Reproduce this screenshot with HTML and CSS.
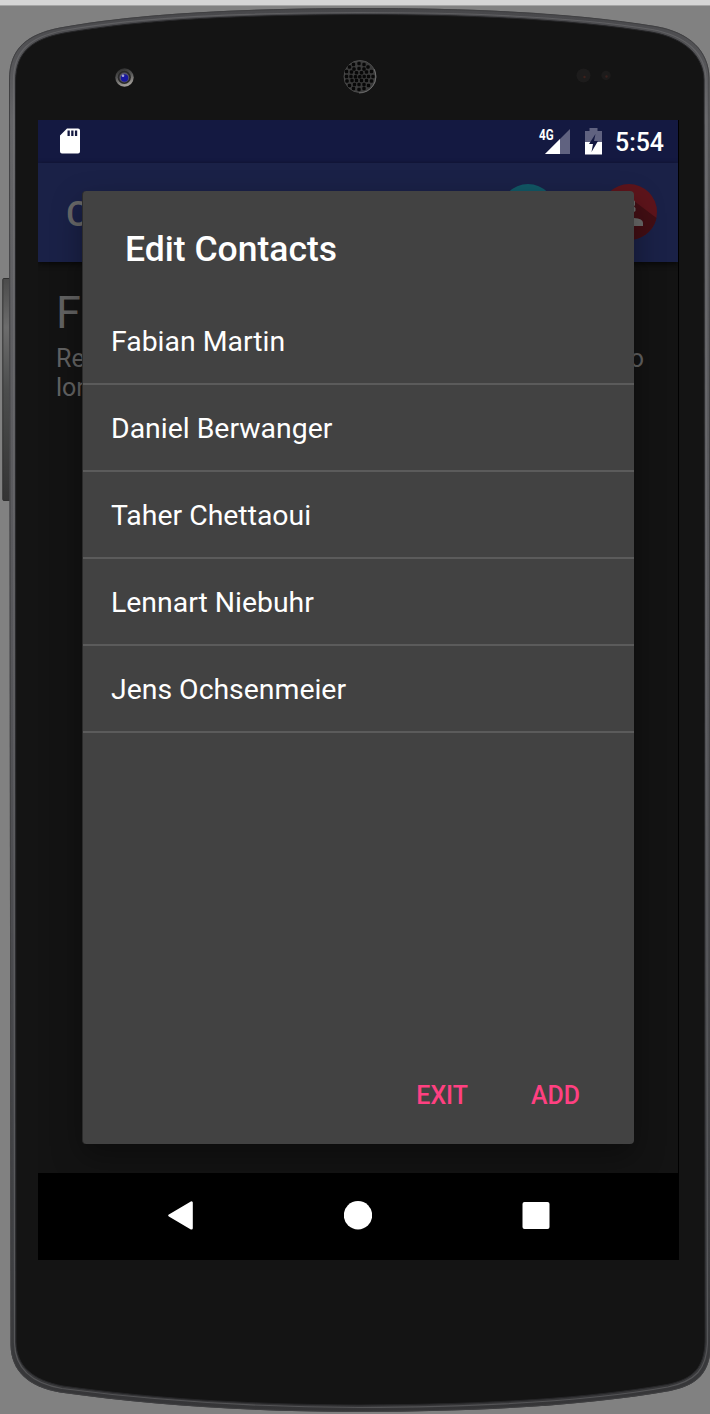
FILE: index.html
```html
<!DOCTYPE html>
<html lang="en">
<head>
<meta charset="utf-8">
<title>Edit Contacts</title>
<link rel="stylesheet" href="styles.css">
</head>
<body>
<main class="stage">
  <svg class="phone" width="710" height="1414" viewBox="0 0 710 1414" aria-hidden="true">
    <defs>
      <linearGradient id="rim" x1="0" y1="0" x2="0" y2="1"><stop offset="0" stop-color="#47474a"/><stop offset=".08" stop-color="#656568"/><stop offset=".45" stop-color="#56565a"/><stop offset=".9" stop-color="#3e3f42"/><stop offset="1" stop-color="#353537"/></linearGradient>
      <linearGradient id="key" x1="0" y1="0" x2="0" y2="1"><stop offset="0" stop-color="#4b4b4b"/><stop offset=".22" stop-color="#6c6c6c"/><stop offset=".5" stop-color="#4c4d4d"/><stop offset="1" stop-color="#343434"/></linearGradient>
      <linearGradient id="lensRing" x1="0" y1="0" x2=".3" y2="1"><stop offset="0" stop-color="#252525"/><stop offset=".5" stop-color="#555"/><stop offset="1" stop-color="#a09c98"/></linearGradient>
      <g id="hole"><rect x="-1.700" y="-1.700" width="3.400" height="3.400" rx="1.200" fill="#080808"/></g>
    </defs>
    <rect width="710" height="5" fill="#d5d5d5"/>
    <rect y="5" width="710" height="1" fill="#a5a5a5"/>
    <rect x="2.8" y="278.5" width="9" height="222" rx="1" fill="url(#key)" stroke="#303030" stroke-width="1"/>
    <path d="M9 80C9 48 27 34 60 27.500C140 13 240 8.500 359 8C465 8 570 12 655 26C690 32 709 51 709.500 78L711 1345C710 1372 699 1385 670 1391C590 1405 490 1411.500 359 1412C240 1411.500 150 1405 60 1392.500C28 1387 11 1371 10.500 1345Z" fill="url(#rim)"/>
    <path d="M9.500 80C9.500 48 27.500 34.500 60 28C140 13.500 240 9 359 8.500C465 8.500 570 12.500 655 26.500C690 32.500 708.500 51 709 78L710.500 1345C709.500 1372 698.500 1384.500 670 1390.500C590 1404.500 490 1411 359 1411.500C240 1411 150 1404.500 60 1392C28.500 1386.500 11.500 1371 11 1345Z" fill="none" stroke="#404042"/>
    <path d="M13.500 80C13.500 50 31 37 63 30.500C145 16.500 240 13 359 12.500C465 12.500 570 16 652 29.500C687 36 705.500 54 706 79L707.500 1343C706.500 1369 696 1381 668 1387C590 1401 490 1407 359 1407.500C240 1407 150 1400 62 1388.500C31 1383 15 1368 14.500 1343Z" fill="none" stroke="#77777b" stroke-opacity=".45" stroke-width="1.200"/>
    <path d="M15.500 82C15.500 51 33 39 64 33C145 19 240 15 359 14.500C465 14.500 570 19 651 32C685 38 703.500 56 704 80L705 1342C704 1367 694 1379 667 1384.500C590 1398 490 1404.500 359 1405C240 1404.500 150 1398 63 1386C32 1380 16.500 1366 16 1342Z" fill="#141414" stroke="#252527"/>
    <circle cx="124.500" cy="77.500" r="9.200" fill="url(#lensRing)"/>
    <circle cx="124.300" cy="77.300" r="6.600" fill="#292929"/>
    <circle cx="124.300" cy="77.500" r="4.900" fill="#565468"/>
    <circle cx="124.500" cy="78" r="3.700" fill="#18189e"/>
    <circle cx="123" cy="75.800" r="1.300" fill="#a5a5d2"/>
    <circle cx="360" cy="76.500" r="16" fill="#3b3b3b" stroke="#4b4b4b"/>
    <use href="#hole" x="359" y="63.500"/><use href="#hole" x="353.500" y="64.500"/><use href="#hole" x="364" y="64.500"/><use href="#hole" x="349.500" y="67"/><use href="#hole" x="368" y="67"/>
    <use href="#hole" x="354" y="69"/><use href="#hole" x="359" y="68.500"/><use href="#hole" x="364" y="69"/><use href="#hole" x="346.500" y="71.500"/><use href="#hole" x="351.500" y="72"/><use href="#hole" x="356.500" y="72.700"/><use href="#hole" x="361.500" y="72.700"/><use href="#hole" x="366.500" y="72"/><use href="#hole" x="371.500" y="71.500"/>
    <use href="#hole" x="346.500" y="76.500"/><use href="#hole" x="351" y="76.500"/><use href="#hole" x="355.500" y="76.800"/><use href="#hole" x="359.800" y="76.800"/><use href="#hole" x="364.200" y="76.500"/><use href="#hole" x="368.500" y="76.500"/><use href="#hole" x="373" y="76.500"/>
    <use href="#hole" x="347" y="81"/><use href="#hole" x="352" y="80.500"/><use href="#hole" x="356.500" y="80.500"/><use href="#hole" x="361.500" y="80.500"/><use href="#hole" x="366.500" y="80.500"/><use href="#hole" x="371.500" y="81"/>
    <use href="#hole" x="349.500" y="85.500"/><use href="#hole" x="354.500" y="84.500"/><use href="#hole" x="359" y="84.500"/><use href="#hole" x="364" y="84.500"/><use href="#hole" x="368.500" y="85.500"/><use href="#hole" x="353.500" y="88.500"/><use href="#hole" x="359" y="89.500"/><use href="#hole" x="364" y="88.500"/>
    <path d="M374 69A16.500 16.500 0 0 1 359 93" fill="none" stroke="#747474" stroke-width=".8"/>
    <circle cx="583.500" cy="75.500" r="7" fill="#1d1c1c"/><circle cx="584.500" cy="77" r="1.200" fill="#3e211c"/>
    <circle cx="606" cy="75.500" r="4.700" fill="#1c1b1b"/><circle cx="606.500" cy="76.500" r="1.200" fill="#3a211e"/>
  </svg>
  <div class="screen">
    <header class="status">
      <svg class="sd" width="20" height="26" viewBox="0 0 20 26"><path fill="#fff" fill-rule="evenodd" d="M7 .5H18Q20 .5 20 2.500V23.500Q20 25.500 18 25.500H2Q0 25.500 0 23.500V7.500ZM7.500 2.500V8H9.800V2.500ZM11.200 2.500V8H13.500V2.500ZM14.900 2.500V8H17.200V2.500Z"/></svg>
      <span class="network">4G</span>
      <svg class="signal" width="25" height="25" viewBox="0 0 25 25"><path d="M25 0V25H0Z" fill="#606280"/><path d="M15 10V25H0Z" fill="#fff"/></svg>
      <svg class="battery" width="17" height="27" viewBox="0 0 17 27"><path d="M4.500 0H12.500V3H17V14H0V3H4.500Z" fill="#606280"/><path d="M0 14H17V26.500H0Z" fill="#fff"/><path d="M10.500 6L4 16H8L6.500 24L13 13H9Z" fill="#141941"/></svg>
      <span class="clock">5:54</span>
    </header>
    <div class="appbar">
      <span class="app-title">C</span>
      <svg class="avatar" width="56" height="56" viewBox="0 0 56 56"><circle cx="28" cy="28" r="28" fill="#115765"/></svg>
      <svg class="avatar" width="56" height="56" viewBox="0 0 56 56"><circle cx="28" cy="28" r="28" fill="#5d141b"/><path d="M33 17L55.500 34A28 28 0 0 1 14 52L20 32Z" fill="#420e14"/><path d="M28 15Q33 15 34 17.500V21L33 22.500L34.500 24V27L33 28H28Z" fill="#696969"/><path d="M14 42Q14 34 24 34H33Q42 34.500 42 39V42Z" fill="#696969"/></svg>
    </div>
    <section class="content">
      <h1 class="page-title">Fa</h1>
      <div class="message"><span>Re</span><span>o</span></div>
      <div class="message"><span>lon</span></div>
    </section>
    <nav class="navbar">
      <svg width="28" height="30" viewBox="0 0 28 30"><path d="M3.500 15.500L25.500 2.700V28.300Z" fill="#fff" stroke="#fff" stroke-width="2.600" stroke-linejoin="round"/></svg>
      <svg width="28" height="30" viewBox="0 0 28 30"><circle cx="14" cy="15.300" r="14.200" fill="#fff"/></svg>
      <svg width="28" height="30" viewBox="0 0 28 30"><rect x=".5" y="2" width="27" height="27" rx="2" fill="#fff"/></svg>
    </nav>
    <section class="dialog">
      <h2 class="dialog-title">Edit Contacts</h2>
      <ul class="contacts">
        <li>Fabian Martin</li>
        <li>Daniel Berwanger</li>
        <li>Taher Chettaoui</li>
        <li>Lennart Niebuhr</li>
        <li>Jens Ochsenmeier</li>
      </ul>
      <footer class="actions"><button>EXIT</button><button>ADD</button></footer>
    </section>
  </div>
</main>
</body>
</html>
```
FILE: styles.css
```css
* { box-sizing: border-box; }
body { margin: 0; background: #818181; font-family: Roboto, sans-serif; }
.stage { position: relative; width: 710px; height: 1414px; padding: 120px 0 0 38px; overflow: hidden; }
/* Device frame sits behind the screen */
.phone { position: absolute; inset: 0; }
.screen { position: relative; display: flex; flex-direction: column; width: 641px; height: 1140px; background: #131313; border-right: 1px solid #000; overflow: hidden; }
.status { display: flex; flex: none; height: 43px; background: #141941; color: #fff; padding: 8px 14px 0 22px; }
.status svg { flex: none; }
.network { margin-left: auto; font: 700 14px/14px Roboto, sans-serif; transform: scaleX(.83); transform-origin: right; }
.signal { margin: 1px 0 0 -9px; }
.battery { margin-left: 15px; }
.clock { margin-left: 13px; font-weight: 500; font-size: 24.900px; line-height: 30px; }
.appbar { display: flex; flex: none; height: 99px; padding: 21px 21px 0 28px; background: #1a2147; box-shadow: 0 2px 5px #080808; }
.app-title { margin-right: auto; font-weight: 500; font-size: 35.500px; line-height: 60px; color: #686868; }
.avatar { flex: none; margin-left: 45px; }
.content { flex: 1; padding: 22px 34px 0 18px; color: #626262; }
.page-title { margin: 0; font-weight: 400; font-size: 45px; line-height: 57px; }
.message { display: flex; justify-content: space-between; padding-top: 3px; font-size: 25px; line-height: 29px; }
.message + .message { padding-top: 0; }
.navbar { display: flex; flex: none; gap: 150px; height: 87px; padding: 27px 0 0 128px; background: #000; }
.dialog { position: absolute; left: 44px; top: 71px; width: 552px; height: 953px; display: flex; flex-direction: column; border-left: 1px solid #2b2b2b; background: #424242; color: #fff; border-radius: 4px; box-shadow: 0 12px 30px rgba(0,0,0,.35); }
.dialog-title { margin: 0; padding: 37px 42px 0; height: 106.500px; font-weight: 500; font-size: 35.500px; line-height: 42px; }
.contacts { margin: 0; padding: 0; list-style: none; }
.contacts li { height: 87.150px; padding: 0 28px; font-size: 28.400px; line-height: 88px; border-bottom: 2px solid #5b5b5b; }
.actions { display: flex; justify-content: flex-end; margin-top: auto; height: 80px; padding: 17px 54px 0 0; gap: 63px; }
.actions button { height: 30px; padding: 0; border: 0; background: none; color: #ff4081; font: 500 24.900px/30px Roboto, sans-serif; }
```
